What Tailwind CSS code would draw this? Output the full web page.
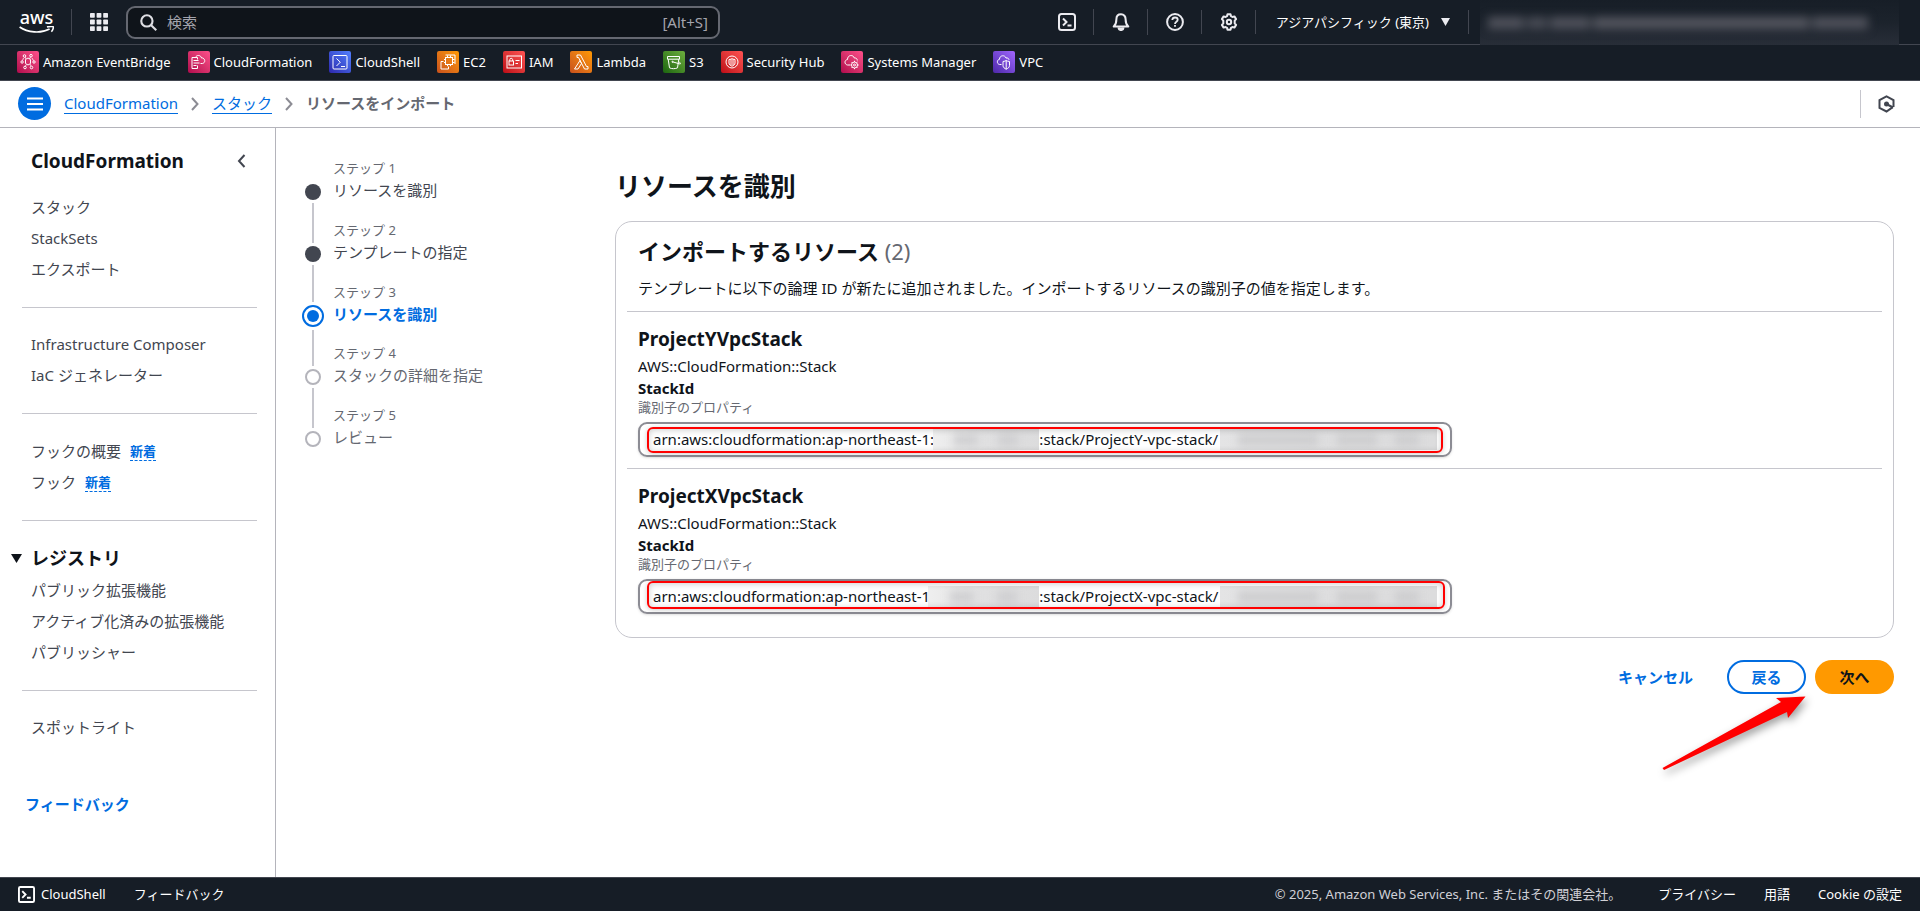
<!DOCTYPE html>
<html lang="ja">
<head>
<meta charset="utf-8">
<meta name="viewport" content="width=device-width, initial-scale=1">
<title>リソースをインポート | CloudFormation</title>
<script src="https://cdn.jsdelivr.net/npm/@tailwindcss/browser@4"></script>
</head>
<body class="flex min-h-screen flex-col bg-white font-['Noto_Sans','Noto_Sans_CJK_JP',sans-serif] text-[15px] leading-5 text-[#0f141a]">

<header class="bg-[#161d26] text-white">
  <div class="flex h-[45px] items-center border-b border-[#424650] pl-[19px] pr-[21px]">
    <a href="#" aria-label="aws" class="flex w-[35px] flex-col items-center text-[18px] font-medium leading-3">
      <span>aws</span>
      <svg class="mt-[3px] h-[7px] w-[35px]" viewBox="0 0 35 7" fill="none" stroke="#fff" stroke-width="1.6"><path d="M.6 1c8 5.600 21 6.800 30 2M28 1c2.300-.8 5.600-.8 6.200-.2.400.6-.3 3.400-1.900 4.900"/></svg>
    </a>
    <span class="ml-[17px] h-[26px] w-px bg-[#424650]"></span>
    <button aria-label="サービス" class="ml-[18px] text-[#ebebf0]">
      <svg class="size-[18px]" viewBox="0 0 18 18" fill="currentColor"><rect width="4.800" height="4.800" rx=".7"/><rect x="6.600" width="4.800" height="4.800" rx=".7"/><rect x="13.200" width="4.800" height="4.800" rx=".7"/><rect y="6.600" width="4.800" height="4.800" rx=".7"/><rect x="6.600" y="6.600" width="4.800" height="4.800" rx=".7"/><rect x="13.200" y="6.600" width="4.800" height="4.800" rx=".7"/><rect y="13.200" width="4.800" height="4.800" rx=".7"/><rect x="6.600" y="13.200" width="4.800" height="4.800" rx=".7"/><rect x="13.200" y="13.200" width="4.800" height="4.800" rx=".7"/></svg>
    </button>
    <label class="ml-[18px] flex h-[33px] w-[594px] items-center rounded-[9px] border-2 border-[#656871] bg-[#0f141a] pl-3 pr-[10px] text-[#a4a4ad]">
      <svg class="size-[17px] text-[#dedee3]" viewBox="0 0 16 16" fill="none" stroke="currentColor" stroke-width="2"><circle cx="6.500" cy="6.500" r="5.300"/><path d="m10.300 10.300 5 5"/></svg>
      <input type="search" aria-label="検索" placeholder="検索" class="ml-[10px] min-w-0 flex-1 bg-transparent outline-none placeholder:text-[#a4a4ad]">
      <span>[Alt+S]</span>
    </label>
    <div class="ml-auto flex items-center text-[#ebebf0]">
      <button aria-label="CloudShell"><svg class="size-[18px]" viewBox="0 0 18 18" fill="none" stroke="currentColor" stroke-width="2"><rect x="1" y="1" width="16" height="16" rx="2.500"/><path d="m5 5.500 3.500 3.500L5 12.500M9.500 12.500h4"/></svg></button>
      <span class="ml-[17px] h-[26px] w-px bg-[#424650]"></span>
      <button aria-label="通知" class="ml-[18px]"><svg class="size-[18px]" viewBox="0 0 18 18" fill="none" stroke="currentColor" stroke-width="2" stroke-linejoin="round"><path d="M9 1.300c-3 0-4.600 2.200-4.600 4.900 0 3.800-1 5.800-2.700 7.300h14.600c-1.700-1.500-2.700-3.500-2.700-7.300C13.600 3.500 12 1.300 9 1.300Z"/><path d="M6.500 14.500c.3 3.400 4.700 3.400 5 0" fill="currentColor"/></svg></button>
      <span class="ml-[17px] h-[26px] w-px bg-[#424650]"></span>
      <button aria-label="サポート" class="ml-[18px]"><svg class="size-[18px]" viewBox="0 0 18 18" fill="none" stroke="currentColor" stroke-width="2"><circle cx="9" cy="9" r="7.900"/><path d="M6.300 7c.1-1.700 1.200-2.500 2.700-2.500s2.700.9 2.700 2.300c0 2-2.700 2-2.700 4.200M9 12v1.800" stroke-width="1.800"/></svg></button>
      <span class="ml-[17px] h-6 w-px bg-[#424650]"></span>
      <button aria-label="設定" class="ml-[18px]"><svg class="size-[18px]" viewBox="0 0 18 18" fill="none" stroke="currentColor" stroke-width="2" stroke-linejoin="round"><path d="M7.500 1.200h3l.5 2 1.400.8 2-.6 1.700 2.700-1.400 1.500v2.800l1.400 1.500-1.700 2.700-2-.6-1.400.8-.5 2h-3l-.5-2-1.400-.8-2 .6-1.700-2.700 1.400-1.500V7.600L1.900 6.100l1.700-2.700 2 .6L7 3.200Z"/><circle cx="9" cy="9" r="2.200"/></svg></button>
      <span class="ml-[17px] h-6 w-px bg-[#424650]"></span>
      <button class="ml-[20px] flex items-center text-[13px] text-white"><span>アジアパシフィック (東京)</span><svg class="ml-3 h-2 w-[9px]" viewBox="0 0 9 8" fill="#ebebf0"><path d="M0 0h9L4.500 8Z"/></svg></button>
      <span class="ml-[18px] h-6 w-px bg-[#424650]"></span>
      <button aria-label="アカウント" class="-mb-px ml-[11px] flex h-[45px] w-[419px] items-center overflow-hidden bg-linear-to-b from-[#171e27] via-[#1c232c] to-[#282e38] px-2">
        <span class="flex h-3 w-[380px] gap-[3px] blur-[5px]"><i class="w-9 bg-[#50525c]"></i><i class="w-5 bg-[#484b55]"></i><i class="w-10 bg-[#50525c]"></i><i class="flex-1 bg-[#54565f]"></i><i class="w-14 bg-[#50525c]"></i></span>
      </button>
    </div>
  </div>

  <nav aria-label="お気に入り" class="flex h-9 items-center gap-[17px] border-b border-[#424650] px-[17px] pb-px text-[13px] leading-[22px]">
    <a href="#" class="flex items-center gap-1"><svg class="size-[22px] rounded-[2px] bg-linear-to-tr from-[#b0084d] to-[#ff4f8b]" viewBox="0 0 21 22" fill="none" stroke="#fff"><path d="m8 8.500 2.500-1.500L13 8.500v4L10.500 14 8 12.500Z"/><circle cx="7" cy="5" r="1.300"/><circle cx="13.500" cy="4.700" r="1.300"/><circle cx="4.600" cy="11" r="1.200"/><circle cx="16.500" cy="11" r="1.200"/><circle cx="7.500" cy="16.500" r="1.300"/><circle cx="14" cy="16.500" r="1.300"/><path d="m7.500 6 1 2M13 6l-1 2M13.500 15l-1-2M8 15l.8-1.500M5 9.700 6 7M16 9.700 14.500 7" stroke-width=".8"/></svg>Amazon EventBridge</a>
    <a href="#" class="flex items-center gap-1"><svg class="size-[22px] rounded-[2px] bg-linear-to-tr from-[#b0084d] to-[#ff4f8b]" viewBox="0 0 21 22" fill="none" stroke="#fff"><path d="M9 14.500v3H3.500v-11H9v2M5 9.500h5M5 12h6M5 14.500h3M7 6.500C8 3.500 12.500 4 13 7c3-.8 5 4.500 1 5.500h-2"/></svg>CloudFormation</a>
    <a href="#" class="flex items-center gap-1"><svg class="size-[22px] rounded-[2px] bg-linear-to-tr from-[#2e27ad] to-[#527fff]" viewBox="0 0 21 22" fill="none" stroke="#fff"><rect x="3.500" y="4.500" width="14" height="13.500" rx="1"/><path d="m7 7.500 3.800 3.700L7 15M11.500 15.500h4"/></svg>CloudShell</a>
    <a href="#" class="flex items-center gap-1"><svg class="size-[22px] rounded-[2px] bg-linear-to-tr from-[#c8511b] to-[#ff9900]" viewBox="0 0 21 22" fill="none" stroke="#fff"><rect x="8" y="6.500" width="7" height="7"/><path d="M10 6.500v-2m3 2v-2M15 8.500h2m-2 3h2M10 13.500v1.700m3-1.700v1.700M8 8.500H6.500M8 11.500H6.500"/><path d="M6 10.500H3.500v7.500H11v-2.500M8 4h9.500v9"/></svg>EC2</a>
    <a href="#" class="flex items-center gap-1"><svg class="size-[22px] rounded-[2px] bg-linear-to-tr from-[#bd0816] to-[#ff5252]" viewBox="0 0 21 22" fill="none" stroke="#fff"><rect x="3.500" y="5" width="14.500" height="12"/><rect x="5.500" y="10" width="4.500" height="4"/><path d="M6.300 10V8.500c0-1.600 2.800-1.600 2.800 0V10M12 9.500h4M12 12.500h2.500"/></svg>IAM</a>
    <a href="#" class="flex items-center gap-1"><svg class="size-[22px] rounded-[2px] bg-linear-to-tr from-[#c8511b] to-[#ff9900]" viewBox="0 0 21 22" fill="none" stroke="#fff"><path d="M9.500 9.500 4 18h3.500l3.500-5.500ZM6.500 4H10l6 11.500h1.500V18H14L8 6.500H6.500Z"/></svg>Lambda</a>
    <a href="#" class="flex items-center gap-1"><svg class="size-[22px] rounded-[2px] bg-linear-to-tr from-[#1b660f] to-[#6cae3e]" viewBox="0 0 21 22" fill="none" stroke="#fff"><path d="M4 5.500h12v2.700H4ZM4.700 8.200 6 16.800c2 1.200 6 1.200 8 0l1.300-8.600M9 10.800l7.500 2.200c1 0 .5-1.300-.8-2"/><circle cx="9" cy="10.800" r=".6"/></svg>S3</a>
    <a href="#" class="flex items-center gap-1"><svg class="size-[22px] rounded-[2px] bg-linear-to-tr from-[#bd0816] to-[#ff5252]" viewBox="0 0 21 22" fill="none" stroke="#fff"><circle cx="10.500" cy="11" r="6"/><path d="M7.500 8.500c2 0 2.500-1 3-1 .5 0 1 1 3 1V12c0 1.800-1.500 2.500-3 3.200-1.500-.7-3-1.400-3-3.200ZM9.500 8v6M11.500 8v6"/></svg>Security Hub</a>
    <a href="#" class="flex items-center gap-1"><svg class="size-[22px] rounded-[2px] bg-linear-to-tr from-[#b0084d] to-[#ff4f8b]" viewBox="0 0 21 22" fill="none" stroke="#fff"><path d="M8.500 14H6c-3.500-.7-3.200-5 0-5.500C6 3.500 12 3.500 12.800 7c2.200-.3 3 1.200 3 2.500"/><circle cx="13" cy="14" r="3"/><circle cx="13" cy="14" r="1"/><path d="M13 9.800V11m0 6v1.200M8.800 14H10m6 0h1.200M10 11l.9.900m4.200 4.200.9.900m0-6-.9.900m-4.200 4.200-.9.900"/></svg>Systems Manager</a>
    <a href="#" class="flex items-center gap-1"><svg class="size-[22px] rounded-[2px] bg-linear-to-tr from-[#4d27a8] to-[#a166ff]" viewBox="0 0 21 22" fill="none" stroke="#fff"><path d="M8 13.500H6c-3-.7-2.700-4.800 0-5.200 0-4.300 5.600-4.600 6.500-1.300 2.200-.3 2.700.7 3 1.800"/><path d="M9.500 10.500c1.500 0 2.500-.7 3.200-1 .7.300 1.800 1 3.300 1v4c0 2-1.800 3-3.300 3.700-1.500-.7-3.200-1.700-3.200-3.700ZM12.700 9.500v8.700"/></svg>VPC</a>
  </nav>
</header>

<div class="flex h-[47px] items-center border-b border-[#b4b4bb] pb-px pl-[18px] pr-[25px]">
  <button aria-label="メニュー" class="flex size-[33px] items-center justify-center rounded-full bg-[#006ce0]"><svg class="size-4" viewBox="0 0 16 16" stroke="#fff" stroke-width="2"><path d="M0 2.500h16M0 8h16M0 13.500h16"/></svg></button>
  <nav aria-label="パンくず" class="ml-[13px] flex items-center leading-[19px]">
    <a href="#" class="border-b border-[#006ce0] text-[#006ce0]">CloudFormation</a>
    <svg class="mx-[13px] h-[14px] w-2" viewBox="0 0 8 14" fill="none" stroke="#8c8c94" stroke-width="2"><path d="m1 1 5.500 6L1 13"/></svg>
    <a href="#" class="border-b border-[#006ce0] text-[#006ce0]">スタック</a>
    <svg class="mx-[13px] h-[14px] w-2" viewBox="0 0 8 14" fill="none" stroke="#8c8c94" stroke-width="2"><path d="m1 1 5.500 6L1 13"/></svg>
    <span aria-current="page" class="font-bold text-[#656871]">リソースをインポート</span>
  </nav>
  <span class="ml-auto h-7 w-px bg-[#c6c6cd]"></span>
  <button aria-label="ツール" class="ml-[17px]"><svg class="h-[18px] w-[17px]" viewBox="0 0 17 18" fill="none" stroke="#424650" stroke-width="2"><path d="m14.800 12.200-6.300 4.300L1.500 13V5l7-3.600 7 3.600v7"/><circle cx="8.500" cy="9" r="2.500" fill="#424650" stroke="none"/><path d="m8.500 9 6.500 3.500"/></svg></button>
</div>

<div class="flex flex-1">
  <aside class="w-[276px] shrink-0 border-r border-[#b4b4bb] pb-8 pl-[22px] pr-[18px] pt-5">
    <div class="flex h-[26px] items-center justify-between pl-[9px] pr-[11px]">
      <h2 class="text-[19px] font-bold leading-[26px]">CloudFormation</h2>
      <button aria-label="ナビゲーションを閉じる"><svg class="h-[14px] w-[9px]" viewBox="0 0 9 14" fill="none" stroke="#424650" stroke-width="2"><path d="M7.500 1 2 7l5.500 6"/></svg></button>
    </div>
    <ul class="mt-[23px] flex flex-col gap-[11px] pl-[9px] text-[#424650]">
      <li><a href="#">スタック</a></li>
      <li><a href="#">StackSets</a></li>
      <li><a href="#">エクスポート</a></li>
    </ul>
    <hr class="mb-[26px] mt-7 border-[#c6c6cd]">
    <ul class="flex flex-col gap-[11px] pl-[9px] text-[#424650]">
      <li><a href="#">Infrastructure Composer</a></li>
      <li><a href="#">IaC ジェネレーター</a></li>
    </ul>
    <hr class="mb-[27px] mt-7 border-[#c6c6cd]">
    <ul class="flex flex-col gap-[11px] pl-[9px] text-[#424650]">
      <li class="flex items-center gap-[9px]"><a href="#">フックの概要</a><button class="border-b border-dashed border-[#006ce0] text-[13px] font-bold leading-[18px] text-[#006ce0]">新着</button></li>
      <li class="flex items-center gap-[9px]"><a href="#">フック</a><button class="border-b border-dashed border-[#006ce0] text-[13px] font-bold leading-[18px] text-[#006ce0]">新着</button></li>
    </ul>
    <hr class="mb-[25px] mt-7 border-[#c6c6cd]">
    <button class="-ml-[11px] flex h-6 items-center gap-[9px] text-[18px] font-bold leading-6"><svg class="h-[9px] w-[11px]" viewBox="0 0 11 9" fill="#0f141a"><path d="M0 0h11L5.500 9Z"/></svg>レジストリ</button>
    <ul class="mt-[10px] flex flex-col gap-[11px] pl-[9px] text-[#424650]">
      <li><a href="#">パブリック拡張機能</a></li>
      <li><a href="#">アクティブ化済みの拡張機能</a></li>
      <li><a href="#">パブリッシャー</a></li>
    </ul>
    <hr class="mb-[26px] mt-7 border-[#c6c6cd]">
    <ul class="pl-[9px] text-[#424650]"><li><a href="#">スポットライト</a></li></ul>
    <a href="#" class="ml-[3px] mt-[57px] block font-bold text-[#006ce0]">フィードバック</a>
  </aside>

  <main class="flex min-w-0 flex-1 px-[26px]">
    <ol aria-label="ステップ" class="w-[313px] shrink-0 pt-[31px]">
      <li class="flex h-[62px] gap-[9px]">
        <span class="flex w-[22px] flex-col items-center gap-[3px]"><i class="h-[22px]"></i><i class="size-4 shrink-0 rounded-full bg-[#424650]"></i><i class="w-[2px] flex-1 bg-[#c6c6cd]"></i></span>
        <span class="flex flex-col gap-[3px]"><span class="text-[13px] leading-[18px] text-[#656871]">ステップ 1</span><a href="#" class="text-[#424650]">リソースを識別</a></span>
      </li>
      <li class="flex h-[62px] gap-[9px]">
        <span class="flex w-[22px] flex-col items-center gap-[3px]"><i class="h-[22px] w-[2px] bg-[#c6c6cd]"></i><i class="size-4 shrink-0 rounded-full bg-[#424650]"></i><i class="w-[2px] flex-1 bg-[#c6c6cd]"></i></span>
        <span class="flex flex-col gap-[3px]"><span class="text-[13px] leading-[18px] text-[#656871]">ステップ 2</span><a href="#" class="text-[#424650]">テンプレートの指定</a></span>
      </li>
      <li class="flex h-[61px] gap-[9px]" aria-current="step">
        <span class="flex w-[22px] flex-col items-center gap-[3px]"><i class="h-[19px] w-[2px] bg-[#c6c6cd]"></i><i class="flex size-[22px] shrink-0 items-center justify-center rounded-full border-2 border-[#006ce0]"><i class="size-3 rounded-full bg-[#006ce0]"></i></i><i class="w-[2px] flex-1 bg-[#c6c6cd]"></i></span>
        <span class="flex flex-col gap-[3px]"><span class="text-[13px] leading-[18px] text-[#656871]">ステップ 3</span><span class="font-bold text-[#006ce0]">リソースを識別</span></span>
      </li>
      <li class="flex h-[62px] gap-[9px]">
        <span class="flex w-[22px] flex-col items-center gap-[3px]"><i class="h-[22px] w-[2px] bg-[#c6c6cd]"></i><i class="size-4 shrink-0 rounded-full border-2 border-[#b4b4bb]"></i><i class="w-[2px] flex-1 bg-[#c6c6cd]"></i></span>
        <span class="flex flex-col gap-[3px] text-[#656871]"><span class="text-[13px] leading-[18px]">ステップ 4</span><span>スタックの詳細を指定</span></span>
      </li>
      <li class="flex h-[61px] gap-[9px]">
        <span class="flex w-[22px] flex-col items-center gap-[3px]"><i class="h-[22px] w-[2px] bg-[#c6c6cd]"></i><i class="size-4 shrink-0 rounded-full border-2 border-[#b4b4bb]"></i></span>
        <span class="flex flex-col gap-[3px] text-[#656871]"><span class="text-[13px] leading-[18px]">ステップ 5</span><span>レビュー</span></span>
      </li>
    </ol>

    <form class="min-w-0 flex-1 pt-[42px]">
      <h1 class="text-[26px] font-bold leading-8">リソースを識別</h1>
      <section class="mt-[19px] rounded-[17px] border border-[#c6c6cd] px-[11px] pb-[23px] pt-[15px]">
        <header class="border-b border-[#c6c6cd] px-[11px] pb-[13px]">
          <h2 class="text-[22px] font-bold leading-7">インポートするリソース <span class="font-normal text-[#656871]">(2)</span></h2>
          <p class="mt-[13px]">テンプレートに以下の論理 ID が新たに追加されました。インポートするリソースの識別子の値を指定します。</p>
        </header>
        <div class="border-b border-[#c6c6cd] px-[11px] pb-[11px] pt-[15px]">
          <h3 class="text-[19px] font-bold leading-6">ProjectYVpcStack</h3>
          <p class="mt-1 leading-[22px]">AWS::CloudFormation::Stack</p>
          <label for="stack-y" class="block font-bold leading-[22px]">StackId</label>
          <p class="text-[13px] leading-4 text-[#656871]">識別子のプロパティ</p>
          <div class="relative mt-[7px] w-[814px] max-w-full">
            <input id="stack-y" type="text" value="arn:aws:cloudformation:ap-northeast-1:&nbsp;&nbsp;&nbsp;&nbsp;&nbsp;&nbsp;&nbsp;&nbsp;&nbsp;&nbsp;&nbsp;&nbsp;&nbsp;&nbsp;&nbsp;&nbsp;&nbsp;&nbsp;&nbsp;&nbsp;&nbsp;&nbsp;&nbsp;&nbsp;&nbsp;&nbsp;&nbsp;:stack/ProjectY-vpc-stack/" class="block h-[35px] w-full rounded-[9px] border-2 border-[#8c8c94] px-[13px] pb-[2px] shadow-sm">
            <span class="absolute left-[295px] top-[7px] flex h-[21px] w-[106px] items-center justify-evenly overflow-hidden bg-linear-to-r from-[#efefef] via-[#e0e0e1] to-[#dcdcdd]"><i class="h-3 w-6 bg-[#cfcfd1] blur-[4px]"></i><i class="h-3 w-5 bg-[#cfcfd1] blur-[4px]"></i></span>
            <span class="absolute left-[582px] top-[7px] flex h-[21px] w-[217px] items-center justify-evenly overflow-hidden bg-linear-to-r from-[#e4e4e5] via-[#dededf] to-[#dcdcdd]"><i class="h-3 w-20 bg-[#cdcdcf] blur-[4px]"></i><i class="h-3 w-10 bg-[#cdcdcf] blur-[4px]"></i><i class="h-3 w-6 bg-[#cdcdcf] blur-[4px]"></i></span>
            <span class="absolute left-[9px] right-[9px] top-[5px] h-[26px] rounded-[6px] border-2 border-[#ff0000] shadow-[0_1px_5px_#0003,inset_0_1px_6px_#0003]"></span>
          </div>
        </div>
        <div class="px-[11px] pt-[15px]">
          <h3 class="text-[19px] font-bold leading-6">ProjectXVpcStack</h3>
          <p class="mt-1 leading-[22px]">AWS::CloudFormation::Stack</p>
          <label for="stack-x" class="block font-bold leading-[22px]">StackId</label>
          <p class="text-[13px] leading-4 text-[#656871]">識別子のプロパティ</p>
          <div class="relative mt-[7px] w-[814px] max-w-full">
            <input id="stack-x" type="text" value="arn:aws:cloudformation:ap-northeast-1&nbsp;&nbsp;&nbsp;&nbsp;&nbsp;&nbsp;&nbsp;&nbsp;&nbsp;&nbsp;&nbsp;&nbsp;&nbsp;&nbsp;&nbsp;&nbsp;&nbsp;&nbsp;&nbsp;&nbsp;&nbsp;&nbsp;&nbsp;&nbsp;&nbsp;&nbsp;&nbsp;&nbsp;:stack/ProjectX-vpc-stack/" class="block h-[35px] w-full rounded-[9px] border-2 border-[#8c8c94] px-[13px] pb-[2px] shadow-sm">
            <span class="absolute left-[290px] top-[7px] flex h-[21px] w-[111px] items-center justify-evenly overflow-hidden bg-linear-to-r from-[#efefef] via-[#e0e0e1] to-[#dcdcdd]"><i class="h-3 w-6 bg-[#cfcfd1] blur-[4px]"></i><i class="h-3 w-5 bg-[#cfcfd1] blur-[4px]"></i></span>
            <span class="absolute left-[582px] top-[7px] flex h-[21px] w-[217px] items-center justify-evenly overflow-hidden bg-linear-to-r from-[#e4e4e5] via-[#dededf] to-[#dcdcdd]"><i class="h-3 w-20 bg-[#cdcdcf] blur-[4px]"></i><i class="h-3 w-10 bg-[#cdcdcf] blur-[4px]"></i><i class="h-3 w-6 bg-[#cdcdcf] blur-[4px]"></i></span>
            <span class="absolute left-[9px] right-[7px] top-[2px] h-[28px] rounded-[6px] border-2 border-[#ff0000] shadow-[0_1px_5px_#0003,inset_0_1px_6px_#0003]"></span>
          </div>
        </div>
      </section>
      <div class="relative mt-[22px] flex items-center justify-end gap-[9px] font-bold">
        <button type="button" class="mr-[25px] text-[#006ce0]">キャンセル</button>
        <button type="button" class="h-[34px] w-[79px] rounded-[17px] border-2 border-[#006ce0] text-[#006ce0]">戻る</button>
        <button type="button" class="h-[34px] w-[79px] rounded-[17px] bg-[#ff9900]">次へ</button>
        <svg class="pointer-events-none absolute right-[81px] top-[30px] h-[90px] w-[160px] drop-shadow-[2px_4px_4px_#0006]" viewBox="0 0 160 90" fill="#ff0000"><path d="M9.500 78 128 12l-5-4 29.500-1.500-17.500 21.500-1-6L11 80Z"/></svg>
      </div>
    </form>
  </main>
</div>

<footer class="flex h-[34px] items-center border-t border-[#424650] bg-[#161d26] px-[18px] pb-px text-[13px] leading-[18px] text-white">
  <button class="flex items-center gap-[6px]"><svg class="size-[17px]" viewBox="0 0 18 18" fill="none" stroke="currentColor" stroke-width="2"><rect x="1" y="1" width="16" height="16" rx="1.500"/><path d="m4.500 5.500 3.500 3.500-3.500 3.500M9.500 12.500h4"/></svg>CloudShell</button>
  <a href="#" class="ml-7">フィードバック</a>
  <span class="ml-auto text-[#d0d0d6]">© 2025, Amazon Web Services, Inc. またはその関連会社。</span>
  <a href="#" class="ml-[37px]">プライバシー</a>
  <a href="#" class="ml-7">用語</a>
  <a href="#" class="ml-7">Cookie の設定</a>
</footer>
</body>
</html>
